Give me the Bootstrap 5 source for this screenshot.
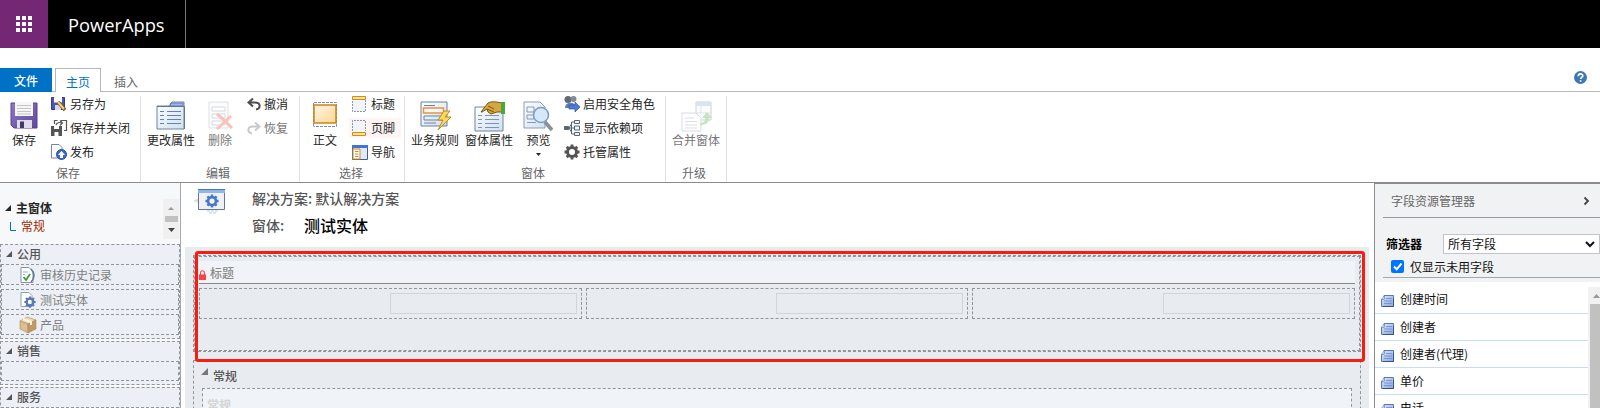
<!DOCTYPE html>
<html lang="zh-CN">
<head>
<meta charset="utf-8">
<meta name="viewport" content="width=device-width, initial-scale=1">
<title>PowerApps</title>
<link href="https://cdn.jsdelivr.net/npm/bootstrap@5.3.0/dist/css/bootstrap.min.css" rel="stylesheet">
<style>
body{font:12px/16px "Noto Sans CJK SC","Liberation Sans",sans-serif;color:#262626;height:408px;background:#fff}
svg{display:block;flex:none;overflow:visible}
.suite{height:48px;background:#000}
.waffle{width:48px;background:#742774}
.brand{width:138px;padding:2px 0 0 20px;border-right:1px solid #767676;color:#fff;font:400 18.3px/46px "Open Sans","Noto Sans",sans-serif}
.tabs{height:44px;padding-top:20px;border-bottom:1px solid #b6b6b8}
.tab-file{width:52px;background:#0072c6;color:#fff;line-height:25px;height:24px}
.tab-on{width:46px;margin-left:3px;border:1px solid #b6b6b8;border-bottom:0;background:#fff;color:#0072c6;line-height:25px;height:24px}
.tab-off{width:50px;color:#666;line-height:28px;height:23px}
.help{margin:3px 13px 0 auto}
.ribbon{height:91px;border-bottom:1px solid #8b8b92}
.suite,.tabs,.ribbon{flex:none}
.grp{position:relative;margin-top:4px;border-right:1px solid #e1e1e1}
.cap{position:absolute;left:0;right:0;bottom:1px;text-align:center;color:#666}
.big{height:66px;text-align:center;white-space:nowrap}
.big svg{margin:5px auto 2px}
.small-col>div{display:flex;align-items:center;height:20px;margin-bottom:4px;gap:3px;white-space:nowrap}
.small-col{margin-top:-2px}
.dim{color:#777}
.dim svg{opacity:.4}
.hot{background:#fdf4f3}
.side{width:181px;border-right:1px solid #a3a7b0;background:#f6f8fa}
.side-top{height:61px;padding:16px 0 0 5px}
.scr{width:16px;height:40px;background:#f0f0f0;margin-right:1px;padding-top:7px}
.dash{border:1px dashed #92969b}
.sec{background:#eceff5;margin-bottom:2px;padding-bottom:3px}
.sec h6{margin:0;height:19px;padding:0 0 2px 5px;font-size:12px;font-weight:500;line-height:17px;color:#555;gap:5px}
.sec .it{height:21px;margin:0 0 4px;padding-left:18px;gap:4px;color:#7f7f7f;line-height:18px}
.sec .it:last-child{margin-bottom:0}
.sec .it:empty{height:20px}
.mainp{background:#fff;min-width:0;padding:0 5px 0 4px}
.head{height:64px;padding:3px 0 0 9px}
.canvas{background:#e8ebf0;height:161px;padding:8px 8px 0;position:relative}
.hdr{height:97px;border:1px dashed #92969b;outline:1px dashed #92969b;outline-offset:-2px;padding:5px}
.hdr-t{height:23px;background:#f0f4f8;border-bottom:1px solid #88887c;color:#8b8b85;font-weight:500;line-height:22px;gap:4px}
.cells{display:grid;grid-template-columns:1fr 1fr 1fr;gap:4px;margin-top:4px}
.cells .dash{height:31px;padding:4px}
.fld{width:187px;height:21px;margin-left:auto;border:1px solid #d2d5d7}
.hl{position:absolute;left:10px;right:4px;top:4px;height:111px;border:3px solid #fc1c0f;border-radius:3px}
.body-s{margin-top:8px;height:60px;padding:0 8px}
.body-s h6{height:27px;margin:0;font-size:12px;font-weight:500;color:#555;gap:5px}
.inner{background:#f0f4f8;height:40px;padding:8px 4px;color:#d4d4d4;font-weight:700}
.exp{width:226px;border-left:1px solid #8b8b92}
.exp-top{height:99px;background:#f1f2f4;border-top:1px solid #8b8b92;padding-left:8px}
.exp-t{height:34px;border-bottom:1px solid #999ba3;padding:0 11px 0 8px;color:#666}
.sel{width:157px;height:20px;border:1px solid #c2c4c9;background:#fff;padding:0 4px;color:#111}
.chk{width:13px;height:13px;border-radius:2px;background:#0075ff;margin:0 6px 0 8px}
.row-i{height:27px;border-bottom:1px solid #c5dcfb;padding:0 0 1px 6px;gap:6px;color:#111}
.row-i svg{margin-top:4px}
.first{height:32px;padding-top:3px}
.bar{width:12px;background:#f1f1f1;margin-top:5px}
.thumb{margin:9px 0 0 2px;background:#c1c1c1;height:110px}
</style>
<script src="https://cdn.jsdelivr.net/npm/bootstrap@5.3.0/dist/js/bootstrap.bundle.min.js"></script>
</head>
<body class="overflow-hidden d-flex flex-column">
<svg width="0" height="0" class="position-absolute">
<defs>
<linearGradient id="gp" x2="1" y2="1"><stop stop-color="#fff"/><stop offset="1" stop-color="#cfdff0"/></linearGradient>
<linearGradient id="go" x2="1" y2="1"><stop stop-color="#fff6e6"/><stop offset="1" stop-color="#ffd591"/></linearGradient>
<linearGradient id="gb" x2="1" y2="1"><stop stop-color="#dfe8fa"/><stop offset="1" stop-color="#86a4de"/></linearGradient>
<linearGradient id="gf" x2="1" y2="1"><stop stop-color="#8f79c8"/><stop offset="1" stop-color="#5d4899"/></linearGradient>
<symbol id="tri" viewBox="0 0 7 7"><path d="M7 0v7H0z" fill="currentColor"/></symbol>
<symbol id="rec" viewBox="0 0 13 12"><path d="M3 .5h9.500v11H.5V4H3z" fill="url(#gb)" stroke="#5c78b4"/><path d="M.5 4.500 3 1v3.500z" fill="#f4f8ff" stroke="#7590c6" stroke-width=".7"/><path d="M5 3.500h6M3 6h8M3 8.500h8" stroke="#6b8acb" stroke-width=".8"/><path d="M12.500 3v8.500H2" fill="none" stroke="#35528f"/></symbol>
<symbol id="gear" viewBox="-8 -8 16 16"><circle r="4.500" fill="none" stroke="currentColor" stroke-width="3"/><path d="M0-7.500V-5M0 7.500V5M-7.500 0H-5M7.500 0H5M-5.300-5.300l1.800 1.800M5.300 5.300 3.500 3.500M-5.300 5.300l1.800-1.800M5.300-5.300 3.500-3.500" stroke="currentColor" stroke-width="2.800"/></symbol>
</defs>
</svg>

<header class="suite d-flex">
<div class="waffle d-flex align-items-center justify-content-center"><svg width="16" height="16" fill="#fff"><path d="M0 0h4v4H0zM6 0h4v4H6zM12 0h4v4h-4zM0 6h4v4H0zM6 6h4v4H6zM12 6h4v4h-4zM0 12h4v4H0zM6 12h4v4H6zM12 12h4v4h-4z"/></svg></div>
<div class="brand">PowerApps</div>
</header>

<nav class="tabs d-flex text-center">
<div class="tab-file fw-medium">文件</div><div class="tab-on">主页</div><div class="tab-off">插入</div>
<svg class="help" width="13" height="13"><circle cx="6.500" cy="6.500" r="6.500" fill="#3e78b3"/><path d="M4.300 5.200c0-3 4.500-3 4.500-.3 0 1.500-2.200 1.500-2.200 3.200M6.600 9.200v1.600" fill="none" stroke="#fff" stroke-width="1.700"/></svg>
</nav>

<section class="ribbon d-flex">
<div class="grp d-flex" style="width:141px">
 <div class="big" style="width:48px"><svg width="28" height="29" viewBox="0 0 28 29"><path d="M1 2h26v25H4l-3-3z" fill="url(#gf)" stroke="#56438d"/><path d="M5 1h18v14H5z" fill="#f6f6f6"/><path d="M7 4.500h14M7 7.500h14M7 10.500h14M7 13h14" stroke="#c4c4c4"/><path d="M7 19h15v8H7z" fill="#dedce8"/><path d="M10 20.500h4v6.500h-4z" fill="#46386f"/></svg><div>保存</div></div>
 <div class="small-col" style="margin-left:3px">
 <div><svg width="16" height="16"><path d="M.5 1.500h13v12H.5z" fill="#4a55b5" stroke="#343c8c"/><path d="M3 1h8v5.500H3z" fill="#fff"/><path d="M4 9h6v5H4z" fill="#d5d8f0"/><path d="m7 6 7 8" stroke="#805020" stroke-width="3.500"/><path d="m7 6 6 7" stroke="#f5d76b" stroke-width="2"/></svg>另存为</div>
 <div><svg width="16" height="16" fill="none"><path d="M0 6h11v10H0z" fill="#555"/><path d="M3 6h5v3H3zM3.500 12h4v4h-4z" fill="#fff"/><path d="M3.500 4V.5h3M10 .5h5.500v10H13M5 5c1-3 3-3 6-2M9 .5 11.500 3 9 5.500" stroke="#555" stroke-width="1.200"/></svg>保存并关闭</div>
 <div><svg width="16" height="16"><path d="M.5.500H8l3 3v10.500H.5z" fill="#fff" stroke="#7487a2"/><circle cx="10.500" cy="10.500" r="5" fill="#3d6cc4" stroke="#285099"/><path d="m10.500 7 3.500 4h-2v3h-3v-3H7z" fill="#fff"/></svg>发布</div>
 </div><div class="cap" style="right:4px">保存</div>
</div>
<div class="grp d-flex" style="width:159px">
 <div class="big" style="width:60px"><svg width="30" height="29"><path d="M1 5h12l3-4h12v27H1z" fill="url(#gp)" stroke="#70849b"/><path d="M15 2h12v3H14z" fill="#9db8e4" stroke="#5c7db5"/><path d="M1 5.500h27.500V28" fill="none" stroke="#63788f"/><path d="M4 10.500h4M4 14.500h4M4 18.500h4M4 22.500h4M11 10.500h14M11 14.500h14M11 18.500h14M11 22.500h14" stroke="#6781ab"/></svg><div>更改属性</div></div>
 <div class="big dim" style="width:38px"><svg width="26" height="29"><path d="M2 1h19v26H2z" fill="#f6f8fa" stroke="#acb5bf"/><path d="M5 6h13v4H5zM5 13h13v4H5zM5 20h13v4H5z" fill="#fff" stroke="#97a3b4"/><path d="M10 13c4 3 10 9 15 14M24 15 10 28" stroke="#f06b54" stroke-width="3"/></svg><div>删除</div></div>
 <div class="small-col" style="margin-left:8px"><div style="gap:3px"><svg width="14" height="13"><path d="M6 .5 1.500 4.500 6 8.500M2 4.500h6c6 0 6 6 1 7" fill="none" stroke="#4d4d4d" stroke-width="2"/></svg>撤消</div><div class="dim" style="gap:3px"><svg width="14" height="13"><path d="m8 .5 4.500 4L8 8.500M12 4.500H6c-6 0-6 6-1 7" fill="none" stroke="#777" stroke-width="2"/></svg>恢复</div></div>
 <div class="cap" style="right:4px">编辑</div>
</div>
<div class="grp d-flex" style="width:105px">
 <div class="big" style="width:48px;margin-left:1px"><svg width="24" height="27" style="margin-bottom:4px"><path d="M.5 25V1.500h23V25.500H.5" fill="none" stroke="#8190a5" stroke-dasharray="3 1"/><path d="M1 4h22v18H1z" fill="url(#go)" stroke="#c98322" stroke-width="1.500"/></svg><div>正文</div></div>
 <div class="small-col ms-auto" style="width:52px;margin-right:3px">
 <div style="padding-left:3px;gap:4px"><svg width="15" height="16"><path d="M.5 5v10.500h13V4" fill="#f1f5fa" stroke="#8796a9" stroke-dasharray="2 1"/><path d="M.5.500h13v3H.5z" fill="#ffe39b" stroke="#d58a1c"/></svg>标题</div>
 <div class="hot" style="padding-left:3px;gap:4px"><svg width="15" height="16"><path d="M.5 11V.5h13V11" fill="#f1f5fa" stroke="#8796a9" stroke-dasharray="2 1"/><path d="M.5 12.500h13v3H.5z" fill="#ffe39b" stroke="#d58a1c"/></svg>页脚</div>
 <div style="padding-left:3px"><svg width="16" height="15"><path d="M.5.500h15v14H.5z" fill="#dfe9f8" stroke="#3e5e9c"/><path d="M0 0h16v3H0z" fill="#3f73df"/><path d="M1 4h7v10H1z" fill="#fff" stroke="#d58a1c"/><path d="M3 6.500h3.500M3 9h3.500M3 11.500h3.500" stroke="#d58a1c"/></svg>导航</div>
 </div><div class="cap" style="right:2px">选择</div>
</div>
<div class="grp d-flex" style="width:261px">
 <div class="big" style="width:58px;margin-left:1px"><svg width="31" height="31"><path d="M1 1h26v24H1z" fill="url(#gp)" stroke="#6b7f99"/><path d="M4 4.500h11M4 22h12M4 15h20v4H4z" fill="none" stroke="#6680a8"/><path d="M3.500 7h20v5h-20z" fill="#f4f7fc" stroke="#e3963a" stroke-width="1.500"/><path d="m24 10-6 9h5l-5 10 13-13h-6l5-6z" fill="#ffd95c" stroke="#bd8a28"/></svg><div style="margin-top:-2px">业务规则</div></div>
 <div class="big" style="width:50px"><svg width="31" height="31"><path d="M1 6h28v24H1z" fill="url(#gp)" stroke="#70849b"/><path d="M4 14.500h4M4 18.500h4M4 22.500h4M4 26.500h4M11 14.500h14M11 18.500h14M11 22.500h14M11 26.500h14" stroke="#7c93ba"/><path d="m7 11 7-9c4-2 9-1 14 0v9h-5l-6 2-3-2-1-3-5 3z" fill="#d6a63f" stroke="#795512"/><path d="m14 5 6 3M13 8l7 3" stroke="#795512"/><path d="M27 1h4v12h-4z" fill="#4aa83b"/></svg><div style="margin-top:-2px">窗体属性</div></div>
 <div class="big" style="width:49px"><svg width="31" height="31"><path d="M1 1h16l5 5v21H1z" fill="url(#gp)" stroke="#8b9cb3"/><path d="M4 6h7v5H4zM4 14h7v4H4zM4 21.500h9" fill="none" stroke="#8499bb"/><path d="m22 21 7 8" stroke="#87919d" stroke-width="3.500"/><circle cx="18" cy="14" r="7.500" fill="#d6e9fa" stroke="#7c9bc0" stroke-width="1.500"/></svg><div style="margin-top:-2px">预览</div><svg style="margin:5px auto 0" width="5" height="3"><path d="M0 0h5L2.500 3z" fill="#222"/></svg></div>
 <div class="small-col ms-auto" style="width:101px"><div><svg width="16" height="16"><circle cx="4" cy="3.500" r="3.500" fill="#626a76"/><circle cx="9.500" cy="3" r="3" fill="#828b99"/><path d="M1 12c0-7 11-7 11 0z" fill="#5f7fb7"/><path d="M5 9h6V6l5 5-5 5v-3H5z" fill="#4f79d8" stroke="#3158ab" stroke-width=".7"/></svg>启用安全角色</div>
 <div><svg width="16" height="16" fill="none" stroke="#566579"><path d="M.5 6.500h4v3h-4z" fill="#566579"/><path d="M10.500.500h5v3h-5zM10.500 6h5v4h-5zM10.500 12.500h5v3h-5z" fill="#edf3fa"/><path d="M5 8h5M10 2H7.500v12H10M7.500 4 5 8l2.500 4"/></svg>显示依赖项</div>
 <div style="color:#555"><svg width="16" height="16"><use href="#gear"/></svg><span style="color:#262626">托管属性</span></div></div>
 <div class="cap" style="right:4px">窗体</div>
</div>
<div class="grp" style="width:61px">
 <div class="big dim" style="width:60px"><svg width="31" height="31"><path d="M15 1h15v18H15z" fill="#f6f9fe" stroke="#8094b1"/><path d="M15 1h15v4H15z" fill="#a7bad8"/><path d="M15 12h15M20 5v7" stroke="#a7bad8"/><path d="M1 12h14l5 5v13H1z" fill="#fff" stroke="#9daab8"/><path d="M4 17h9M4 20.500h12M4 24h12M4 27h12" stroke="#a8b4c2"/><path d="M19 22c5 0 5-3 5-5h-3l5-6 5 6h-3c0 5-3 7-9 7z" fill="#75bd62"/></svg><div style="margin-top:-2px">合并窗体</div></div>
 <div class="cap" style="right:4px">升级</div>
</div>
</section>

<div class="d-flex flex-grow-1 overflow-hidden">
<aside class="side flex-shrink-0">
 <div class="side-top d-flex justify-content-between">
 <div><div class="d-flex align-items-center fw-bold" style="gap:5px;height:17px"><svg width="6" height="6"><use href="#tri"/></svg>主窗体</div><div class="d-flex align-items-center" style="gap:5px;height:20px;padding-left:5px;color:#a32a00"><svg width="6" height="9"><path d="M.5 0v8.500H6" fill="none" stroke="#0072c6"/></svg>常规</div></div>
 <div class="scr"><svg width="16" height="28"><path d="M5 4h6L8 1z" fill="#999"/><path d="M2 10h13v6H2z" fill="#c1c1c1"/><path d="M5 22h7l-3.500 4z" fill="#444"/></svg></div>
 </div>
 <div class="sec dash"><h6 class="d-flex align-items-center"><svg width="6" height="6"><use href="#tri"/></svg>公用</h6>
 <div class="it dash d-flex align-items-center"><svg width="16" height="16"><path d="M1 .5h8l4 4v11H1z" fill="#fff" stroke="#8194a9"/><path d="M11 2c4 4 4 9 0 13" fill="none" stroke="#567898" stroke-width="1.500"/><path d="M3 5h5M3 7.500h2" stroke="#9db1ca"/><path d="m3.500 10 2.500 3 4-6" fill="none" stroke="#43963c" stroke-width="1.800"/></svg>审核历史记录</div>
 <div class="it dash d-flex align-items-center"><svg width="16" height="16"><path d="M1 .5h8l3 3v11H1z" fill="#fff" stroke="#93a2b5"/><svg x="4" y="4" width="12" height="12" color="#5878b3"><use href="#gear"/></svg></svg>测试实体</div>
 <div class="it dash d-flex align-items-center"><svg width="16" height="16" stroke="#a88860" stroke-width=".6"><path d="m0 4 7-4 9 3-8 4z" fill="#eedab7"/><path d="m0 4 8 3v9l-8-4z" fill="#dcbf90"/><path d="m8 7 8-4v9l-8 4z" fill="#c09a64"/><path d="m3 2 8 3v3" fill="none" stroke="#fff4dc" stroke-width="2"/></svg>产品</div></div>
 <div class="sec dash"><h6 class="d-flex align-items-center"><svg width="6" height="6"><use href="#tri"/></svg>销售</h6><div class="it dash"></div></div>
 <div class="sec dash"><h6 class="d-flex align-items-center"><svg width="6" height="6"><use href="#tri"/></svg>服务</h6><div class="it dash"></div></div>
</aside>

<main class="mainp flex-grow-1">
 <div class="head d-flex"><svg width="36" height="28"><path d="M-1 15 5 12v5z" fill="#ddd"/><path d="M4.500 3.500h26v20h-26z" fill="#eef2f7" stroke="#6c7682"/><path d="M4 3h27v4H4z" fill="#8fb6e6"/><path d="M4 3.500h27" stroke="#50769f"/><svg x="11" y="8" width="14" height="14" color="#4d78c0"><use href="#gear"/></svg><path d="M13 25h11M15 27h7" stroke="#b8c9e7" stroke-dasharray="3 1"/></svg>
 <div class="fw-medium" style="margin-left:22px;color:#555;font-size:14px"><div style="line-height:24px">解决方案: 默认解决方案</div><div class="d-flex" style="line-height:31px"><div style="width:52px">窗体:</div><div style="color:#000;font-size:16px">测试实体</div></div></div></div>
 <div class="canvas">
 <div class="hdr"><div class="hdr-t d-flex align-items-center"><svg width="7" height="10" style="margin-top:5px"><path d="M1.500 5V3c0-3 4-3 4 0v2" fill="none" stroke="#ef5252" stroke-width="1.200"/><path d="M0 4.500h7V10H0z" fill="#fb4545"/></svg><span style="padding-top:2px">标题</span></div>
 <div class="cells"><div class="dash"><div class="fld"></div></div><div class="dash"><div class="fld"></div></div><div class="dash"><div class="fld"></div></div></div></div>
 <div class="body-s dash"><h6 class="d-flex"><svg width="7" height="7" style="margin:7px 0 0 -1px"><use href="#tri" color="#777"/></svg><span style="padding-top:8px">常规</span></h6><div class="inner dash">常规</div></div>
 <div class="hl"></div>
 </div>
</main>

<aside class="exp flex-shrink-0">
 <div class="exp-top"><div class="exp-t d-flex align-items-center justify-content-between">字段资源管理器<svg width="5" height="8"><path d="m.5.500 3.500 3.500L.5 7.500" fill="none" stroke="#444" stroke-width="1.800"/></svg></div>
 <div class="d-flex align-items-center justify-content-between" style="margin-top:16px;padding-left:3px"><b class="text-black">筛选器</b><div class="sel d-flex align-items-center justify-content-between">所有字段<svg width="10" height="6"><path d="m1 1 4 4 4-4" fill="none" stroke="#111" stroke-width="2"/></svg></div></div>
 <div class="d-flex align-items-center" style="height:24px;padding-top:2px;border-bottom:1px solid #a3a6b4;color:#111"><div class="chk"><svg width="13" height="13"><path d="m3 6.500 2.700 2.800L10.500 3.500" fill="none" stroke="#fff" stroke-width="2"/></svg></div>仅显示未用字段</div></div>
 <div class="d-flex">
 <div class="flex-grow-1">
 <div class="row-i first d-flex align-items-center"><svg width="13" height="12"><use href="#rec"/></svg>创建时间</div>
 <div class="row-i d-flex align-items-center"><svg width="13" height="12"><use href="#rec"/></svg>创建者</div>
 <div class="row-i d-flex align-items-center"><svg width="13" height="12"><use href="#rec"/></svg>创建者(代理)</div>
 <div class="row-i d-flex align-items-center"><svg width="13" height="12"><use href="#rec"/></svg>单价</div>
 <div class="row-i d-flex align-items-center"><svg width="13" height="12"><use href="#rec"/></svg>电话</div>
 </div><div class="bar"><svg width="12" height="8"><path d="M5 11h7L8.500 7z" fill="#999"/></svg><div class="thumb"></div></div>
 </div>
</aside>
</div>
</body>
</html>
